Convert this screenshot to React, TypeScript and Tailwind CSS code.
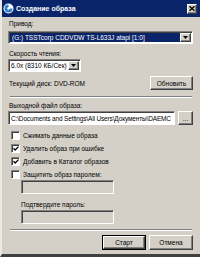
import React from "react";

const sunken =
  "border border-t-[#808080] border-l-[#808080] border-b-white border-r-white shadow-[inset_1px_1px_0_#404040]";
const raised =
  "border border-t-white border-l-white border-b-[#404040] border-r-[#404040] shadow-[inset_-1px_-1px_0_#808080] bg-[#d4d0c8]";

function Arrow() {
  return (
    <div className={`flex h-full w-[11px] shrink-0 items-center justify-center ${raised}`}>
      <svg width="5" height="3" viewBox="0 0 5 3">
        <path d="M0 0h5L2.5 3z" fill="#000" />
      </svg>
    </div>
  );
}

function Check({ checked }: { checked?: boolean }) {
  return (
    <div className={`flex h-[9px] w-[9px] shrink-0 items-center justify-center bg-white ${sunken}`}>
      {checked && (
        <svg width="6" height="5" viewBox="0 0 6 5">
          <path d="M0.5 2.2L2.2 4L5.5 0.6" stroke="#000" strokeWidth="1.3" fill="none" />
        </svg>
      )}
    </div>
  );
}

function Separator() {
  return <div className="mx-[8px] h-[2px] border-t border-t-[#808080] border-b border-b-white" />;
}

export default function App() {
  const options = [
    { label: "Сжимать данные образа", checked: false },
    { label: "Удалить образ при ошибке", checked: true },
    { label: "Добавить в Каталог образов", checked: true },
    { label: "Защитить образ паролем:", checked: false },
  ];

  return (
    <div
      className="flex h-[257px] w-[200px] flex-col overflow-hidden bg-[#d4d0c8] text-[6.5px] leading-[7px] whitespace-nowrap text-black"
      style={{ fontFamily: '"Liberation Sans", Arial, sans-serif' }}
    >
      <div className="flex flex-1 flex-col border-l-2 border-l-[#ece9e2] border-b-[3px] border-b-[#404040]">
        {/* Title bar */}
        <div className="flex h-[17px] shrink-0 items-center bg-[#0a246a] pl-[1px] pr-[3px]">
          <svg width="11" height="11" viewBox="0 0 11 11" className="shrink-0">
            <circle cx="5.5" cy="5.5" r="5" fill="#fff" />
            <path d="M5.5 1.5a4 4 0 1 0 4 4H5.5z" fill="#2a7fd0" />
            <circle cx="5.5" cy="5.5" r="1.2" fill="#fff" />
          </svg>
          <span className="ml-[2px] text-[7px] font-bold text-white">Создание образа</span>
          <div className={`ml-auto flex h-[10px] w-[10px] items-center justify-center ${raised}`}>
            <svg width="6" height="5" viewBox="0 0 6 5">
              <path d="M0.5 0.3L5.5 4.7M5.5 0.3L0.5 4.7" stroke="#000" strokeWidth="1.4" />
            </svg>
          </div>
        </div>

        <div className="flex flex-col px-[6px] pt-[3px]">
          <div className="ml-[1px] h-[7px]">Привод:</div>
          <div className={`mt-[4px] flex h-[13px] w-[185px] items-stretch bg-white p-[1px] ${sunken}`}>
            <div className="flex flex-1 items-center bg-[#0a246a] pl-[2px] text-white">
              (G:) TSSTcorp CDDVDW TS-L633J atapi [1:0]
            </div>
            <Arrow />
          </div>

          <div className="ml-[1px] mt-[6px] h-[7px]">Скорость чтения:</div>
          <div className={`mt-[2px] flex h-[13px] w-[73px] items-stretch bg-white p-[1px] ${sunken}`}>
            <div className="flex flex-1 items-center overflow-hidden pl-[1px]">6.0x (8310 КБ/Сек)</div>
            <Arrow />
          </div>

          <div className="mt-[4px] flex h-[14px] items-center justify-between pr-[1px]">
            <span className="ml-[1px]">Текущий диск: DVD-ROM</span>
            <div className={`flex h-[14px] w-[43px] items-center justify-center ${raised}`}>Обновить</div>
          </div>
        </div>

        <div className="mt-[6px]">
          <Separator />
        </div>

        <div className="flex flex-col px-[6px] pt-[4px]">
          <div className="ml-[1px] h-[7px]">Выходной файл образа:</div>
          <div className="mt-[2px] flex items-center gap-[3px]">
            <div className={`flex h-[14px] w-[167px] items-center overflow-hidden bg-white pl-[2px] tracking-[-0.15px] ${sunken}`}>
              C:\Documents and Settings\All Users\Документы\DAEMC
            </div>
            <div className={`flex h-[14px] w-[15px] items-center justify-center ${raised}`}>...</div>
          </div>

          <div className="mt-[6px] flex flex-col gap-[4px] pl-[3px]">
            {options.map((o) => (
              <div key={o.label} className="flex h-[9px] items-center gap-[3px]">
                <Check checked={o.checked} />
                <span>{o.label}</span>
              </div>
            ))}
          </div>

          <div className="flex flex-col pl-[13px]">
            <div className={`mt-[1px] h-[14px] w-[93px] bg-[#d4d0c8] ${sunken}`} />
            <div className="mt-[7px] h-[7px]">Подтвердите пароль:</div>
            <div className={`mt-[2px] h-[14px] w-[93px] bg-[#d4d0c8] ${sunken}`} />
          </div>
        </div>

        <div className="mt-[5px]">
          <Separator />
        </div>

        <div className="flex justify-end gap-[3px] pr-[7px] pt-[4px]">
          <div className="border border-black">
            <div className={`flex h-[13px] w-[42px] items-center justify-center ${raised}`}>Старт</div>
          </div>
          <div className={`flex h-[15px] w-[44px] items-center justify-center ${raised}`}>Отмена</div>
        </div>
      </div>
    </div>
  );
}
